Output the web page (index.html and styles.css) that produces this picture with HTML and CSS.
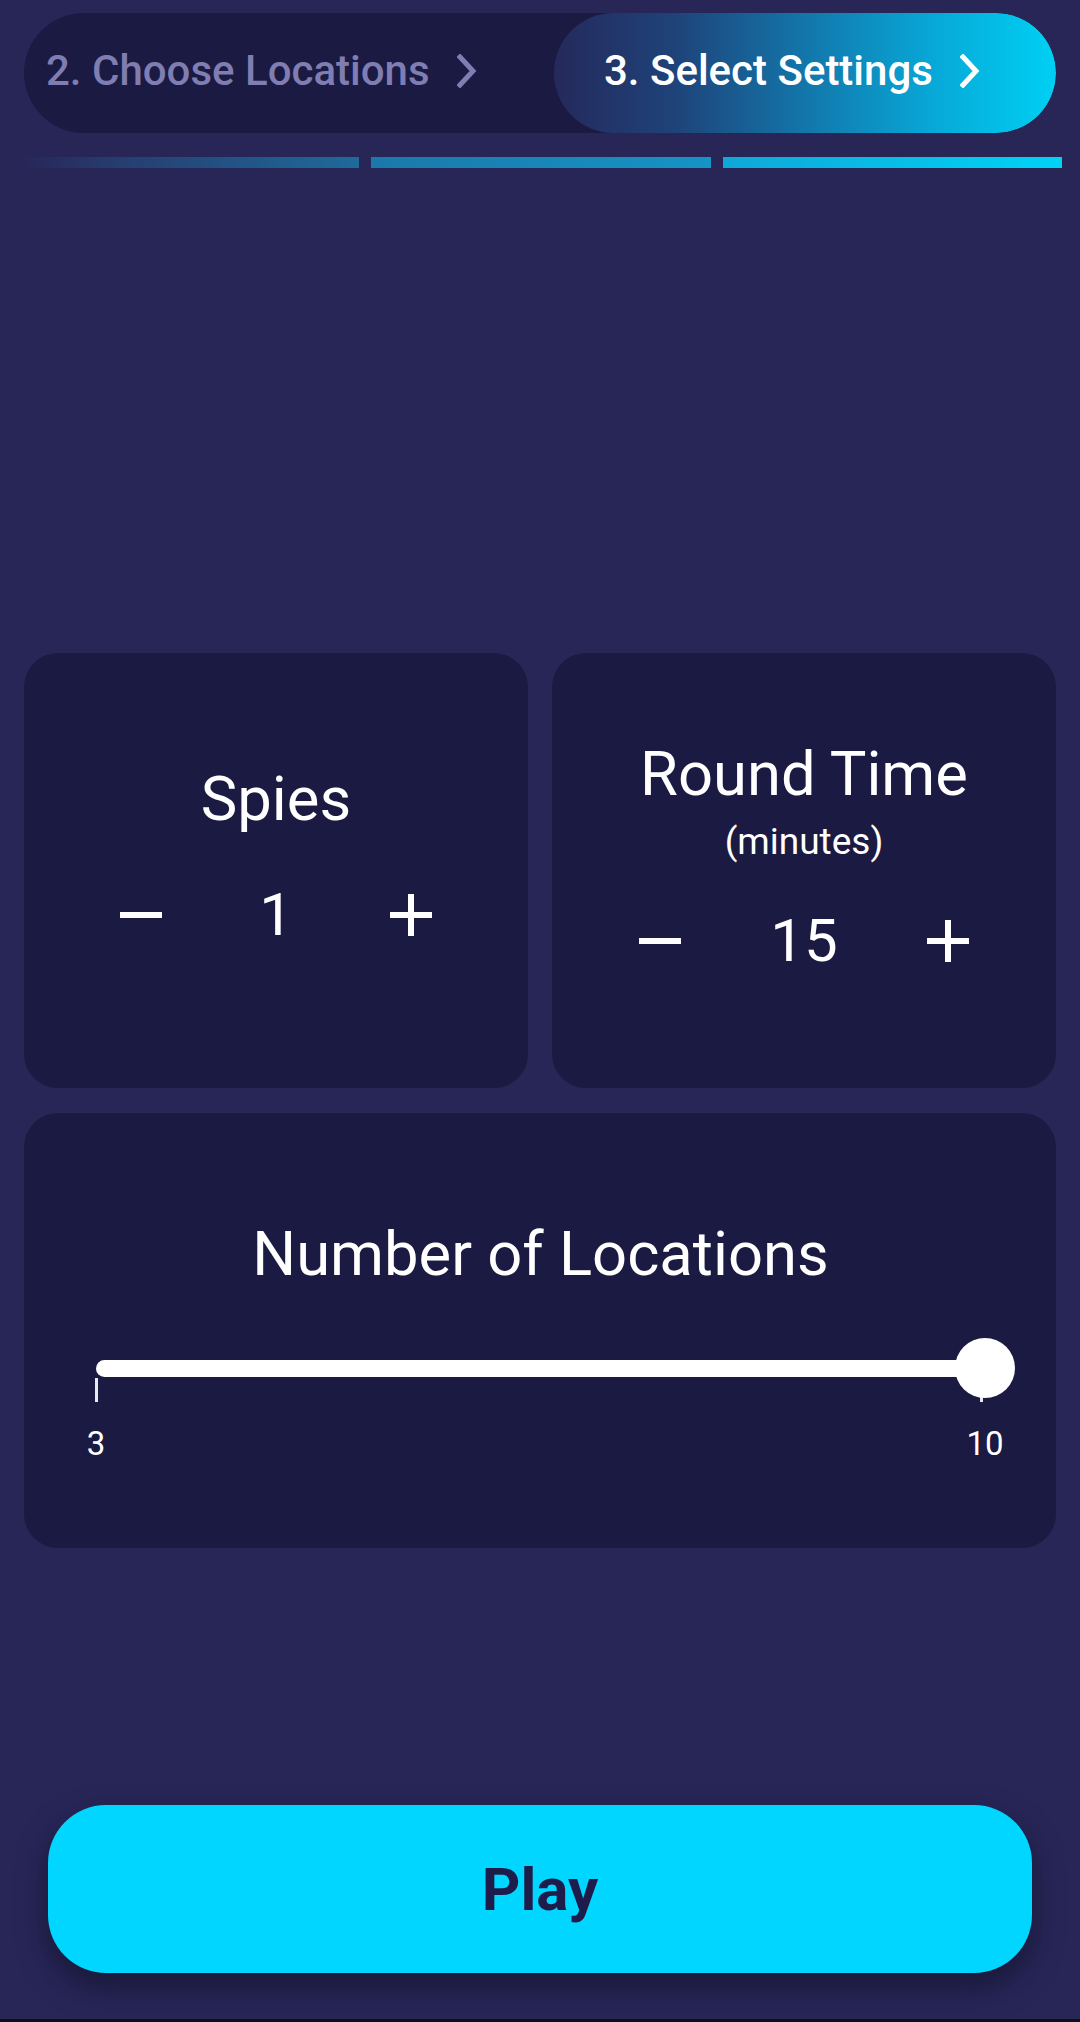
FILE: index.html
```html
<!DOCTYPE html>
<html>
<head>
<meta charset="utf-8">
<link rel="stylesheet" href="styles.css">
</head>
<body>
<div class="screen">
  <header class="header">
    <nav class="tabs">
      <div class="tab tab-inactive">
        <span>2. Choose Locations</span>
        <svg class="chev" viewBox="0 0 20 34"><polyline points="3,3 16,17 3,31" fill="none" stroke="currentColor" stroke-width="5" stroke-linecap="square" stroke-linejoin="miter"/></svg>
      </div>
      <div class="tab tab-active">
        <span>3. Select Settings</span>
        <svg class="chev" viewBox="0 0 20 34"><polyline points="3,3 16,17 3,31" fill="none" stroke="currentColor" stroke-width="5" stroke-linecap="square" stroke-linejoin="miter"/></svg>
      </div>
    </nav>
    <div class="progress">
      <div class="seg seg1"></div>
      <div class="seg seg2"></div>
      <div class="seg seg3"></div>
    </div>
  </header>

  <main class="settings">
    <div class="row-two">
      <section class="card card-step">
        <div class="title">Spies</div>
        <div class="stepper">
          <svg class="icon" viewBox="0 0 24 24"><path d="M19 13H5v-2h14v2z" fill="currentColor"/></svg>
          <div class="value">1</div>
          <svg class="icon" viewBox="0 0 24 24"><path d="M19 13h-6v6h-2v-6H5v-2h6V5h2v6h6v2z" fill="currentColor"/></svg>
        </div>
      </section>
      <section class="card card-step">
        <div class="title">Round Time</div>
        <div class="sub">(minutes)</div>
        <div class="stepper">
          <svg class="icon" viewBox="0 0 24 24"><path d="M19 13H5v-2h14v2z" fill="currentColor"/></svg>
          <div class="value">15</div>
          <svg class="icon" viewBox="0 0 24 24"><path d="M19 13h-6v6h-2v-6H5v-2h6V5h2v6h6v2z" fill="currentColor"/></svg>
        </div>
      </section>
    </div>
    <section class="card card-slider">
      <div class="title">Number of Locations</div>
      <div class="slider">
        <div class="track-area">
          <div class="track"></div>
          <div class="tick tick-start"></div>
          <div class="tick tick-end"></div>
          <div class="thumb"></div>
        </div>
        <div class="labels">
          <span class="label">3</span>
          <span class="label">10</span>
        </div>
      </div>
    </section>
  </main>

  <div class="actions">
    <button class="play">Play</button>
  </div>
  <div class="navline"></div>
</div>
</body>
</html>
```

FILE: styles.css
```css
* { box-sizing: border-box; }

html, body {
  margin: 0;
  padding: 0;
  background: #272657;
}

.screen {
  width: 1080px;
  height: 2022px;
  display: flex;
  flex-direction: column;
  font-family: Roboto, "Noto Sans", sans-serif;
  color: #ffffff;
  background: #272657;
  overflow: hidden;
}

/* ---------- header ---------- */
.header {
  padding-top: 13px;
}

.tabs {
  margin: 0 24px;
  height: 120px;
  border-radius: 60px;
  background: #1b1a42;
  display: flex;
  overflow: hidden;
}

.tab {
  display: flex;
  align-items: center;
  gap: 27px;
  font-size: 42px;
  font-weight: 500;
  padding-bottom: 5px;
  white-space: nowrap;
}

.tab-inactive {
  flex: none;
  width: 530px;
  padding-left: 22px;
  color: #7f7db1;
}

.tab-active {
  flex: 1;
  padding-left: 50px;
  border-radius: 60px;
  color: #ffffff;
  background: linear-gradient(90deg, #25295b 0%, #1e4379 24%, #127aae 52%, #07a9d8 76%, #00d0f3 100%);
}

.chev {
  width: 20px;
  height: 34px;
  flex: none;
}

.progress {
  display: flex;
  gap: 12px;
  margin: 24px 18px 0 20px;
  height: 11px;
}

.seg { flex: 1; }
.seg1 { background: linear-gradient(90deg, rgba(39,38,87,0) 0%, #263e70 30%, #1e6b9b 100%); }
.seg2 { background: linear-gradient(90deg, #1a79aa 0%, #1594c5 100%); }
.seg3 { background: linear-gradient(90deg, #0fa8d8 0%, #00d3f5 100%); }

/* ---------- cards ---------- */
.settings {
  margin: 485px 24px 0;
  display: flex;
  flex-direction: column;
  gap: 25px;
}

.row-two {
  display: grid;
  grid-template-columns: 1fr 1fr;
  gap: 24px;
}

.card {
  background: #1b1a42;
  border-radius: 34px;
  height: 435px;
}

.card-step {
  display: flex;
  flex-direction: column;
  align-items: center;
  justify-content: center;
  padding-bottom: 27px;
}

.title {
  font-size: 61.5px;
  line-height: 72px;
  font-weight: 400;
  text-align: center;
}

.sub {
  font-size: 37px;
  line-height: 38px;
  margin-top: 13px;
}

.stepper {
  margin-top: 44px;
  height: 72px;
  display: flex;
  align-items: center;
  gap: 74px;
}

.icon {
  width: 72px;
  height: 72px;
  color: #ffffff;
  flex: none;
}

.value {
  min-width: 50px;
  text-align: center;
  font-size: 60px;
  line-height: 72px;
}

/* ---------- slider ---------- */
.card-slider {
  padding: 105px 71px 0 72px;
}

.slider {
  margin-top: 48px;
}

.track-area {
  position: relative;
  height: 60px;
  display: flex;
  align-items: center;
}

.track {
  width: 100%;
  height: 17px;
  background: #ffffff;
  border-radius: 9px 0 0 9px;
}

.tick {
  position: absolute;
  top: 40px;
  width: 3px;
  height: 24px;
  background: #e8e8f0;
}
.tick-start { left: -1px; }
.tick-end { right: 2px; }

.thumb {
  position: absolute;
  right: -30px;
  top: 0;
  width: 60px;
  height: 60px;
  border-radius: 50%;
  background: #ffffff;
}

.labels {
  margin: 27px -40px 0;
  display: flex;
  justify-content: space-between;
}

.label {
  width: 80px;
  text-align: center;
  font-size: 33px;
  line-height: 38px;
}

/* ---------- play ---------- */
.actions {
  margin-top: auto;
  padding: 0 48px 46px;
}

.play {
  display: block;
  width: 100%;
  height: 168px;
  border: none;
  border-radius: 58px;
  background: #00d6ff;
  color: #1d1c4b;
  font-family: Roboto, "Noto Sans", sans-serif;
  font-size: 60px;
  font-weight: 700;
  box-shadow: 0 14px 30px rgba(12, 12, 32, 0.55);
}

.navline {
  height: 3px;
  background: #0e0e1c;
  flex: none;
}
```
